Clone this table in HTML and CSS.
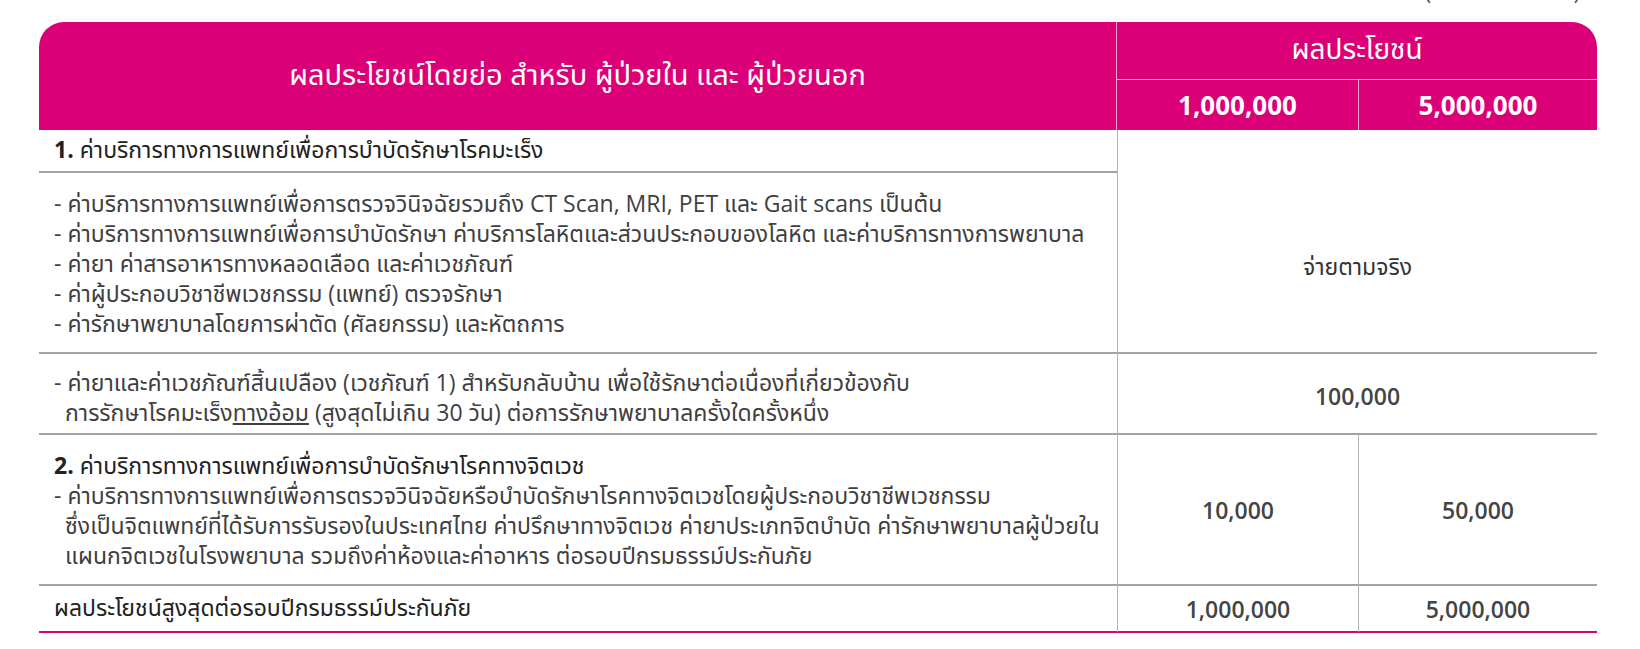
FILE: index.html
```html
<!DOCTYPE html>
<html lang="th">
<head>
<meta charset="utf-8">
<link rel="stylesheet" href="styles.css">
</head>
<body>
<div class="page">
  <div class="unit"><span>(จำนวนเงิน : บาท)</span></div>
  <div class="table">
    <div class="h-title">ผลประโยชน์โดยย่อ สำหรับ ผู้ป่วยใน และ ผู้ป่วยนอก</div>
    <div class="h-benefit">ผลประโยชน์</div>
    <div class="h-amt">1,000,000</div>
    <div class="h-amt h-amt-last">5,000,000</div>

    <div class="c-head">
      <span><b>1.</b> ค่าบริการทางการแพทย์เพื่อการบำบัดรักษาโรคมะเร็ง</span>
    </div>
    <div class="c-val c-span c-actual">จ่ายตามจริง</div>
    <div class="c-list">
      <div class="li">- ค่าบริการทางการแพทย์เพื่อการตรวจวินิจฉัยรวมถึง CT Scan, MRI, PET และ Gait scans เป็นต้น</div>
      <div class="li">- ค่าบริการทางการแพทย์เพื่อการบำบัดรักษา ค่าบริการโลหิตและส่วนประกอบของโลหิต และค่าบริการทางการพยาบาล</div>
      <div class="li">- ค่ายา ค่าสารอาหารทางหลอดเลือด และค่าเวชภัณฑ์</div>
      <div class="li">- ค่าผู้ประกอบวิชาชีพเวชกรรม (แพทย์) ตรวจรักษา</div>
      <div class="li">- ค่ารักษาพยาบาลโดยการผ่าตัด (ศัลยกรรม) และหัตถการ</div>
    </div>

    <div class="c-text c-row3">
      <div class="li">- ค่ายาและค่าเวชภัณฑ์สิ้นเปลือง (เวชภัณฑ์ 1) สำหรับกลับบ้าน เพื่อใช้รักษาต่อเนื่องที่เกี่ยวข้องกับ</div>
      <div class="li indent">การรักษาโรคมะเร็ง<u>ทางอ้อม</u> (สูงสุดไม่เกิน 30 วัน) ต่อการรักษาพยาบาลครั้งใดครั้งหนึ่ง</div>
    </div>
    <div class="c-val c-span c-row3">100,000</div>

    <div class="c-text c-row4">
      <div class="li head"><b>2.</b> ค่าบริการทางการแพทย์เพื่อการบำบัดรักษาโรคทางจิตเวช</div>
      <div class="li">- ค่าบริการทางการแพทย์เพื่อการตรวจวินิจฉัยหรือบำบัดรักษาโรคทางจิตเวชโดยผู้ประกอบวิชาชีพเวชกรรม</div>
      <div class="li indent">ซึ่งเป็นจิตแพทย์ที่ได้รับการรับรองในประเทศไทย ค่าปรึกษาทางจิตเวช ค่ายาประเภทจิตบำบัด ค่ารักษาพยาบาลผู้ป่วยใน</div>
      <div class="li indent">แผนกจิตเวชในโรงพยาบาล รวมถึงค่าห้องและค่าอาหาร ต่อรอบปีกรมธรรม์ประกันภัย</div>
    </div>
    <div class="c-val c-row4">10,000</div>
    <div class="c-val c-row4 c-last">50,000</div>

    <div class="c-text c-total">ผลประโยชน์สูงสุดต่อรอบปีกรมธรรม์ประกันภัย</div>
    <div class="c-val c-total">1,000,000</div>
    <div class="c-val c-total c-last">5,000,000</div>
  </div>
</div>
</body>
</html>
```

FILE: styles.css
```css
* { box-sizing: border-box; }
html, body { margin: 0; padding: 0; background: #fff; }
body {
  font-family: "Open Sans", "Noto Sans", "Noto Sans Thai", sans-serif;
  color: #3f3f3f;
}
.page {
  padding: 0 43px 0 39px;
  width: 1640px;
}
.unit {
  height: 22px;
  display: flex;
  justify-content: flex-end;
  align-items: flex-start;
  padding-right: 17px;
  font-size: 22px;
  color: #555;
}
.unit span {
  display: block;
  line-height: 24px;
  margin-top: -21px;
}
.table {
  display: grid;
  grid-template-columns: 1078px 241px 239px;
  grid-template-rows: 58px 50px 43px 181px 81px 151px 47px;
  width: 1558px;
}
.h-title {
  grid-column: 1;
  grid-row: 1 / 3;
  background: #dc0078;
  color: #fff;
  border-top-left-radius: 25px;
  border-right: 1px solid #f3a6cf;
  display: flex;
  align-items: center;
  justify-content: center;
  font-size: 29px;
}
.h-benefit {
  grid-column: 2 / 4;
  grid-row: 1;
  background: #dc0078;
  color: #fff;
  border-top-right-radius: 25px;
  border-bottom: 1px solid #f3a6cf;
  display: flex;
  align-items: center;
  justify-content: center;
  font-size: 28px;
}
.h-amt {
  grid-row: 2;
  background: #dc0078;
  color: #fff;
  display: flex;
  align-items: center;
  justify-content: center;
  font-size: 26px;
  font-weight: 700;
}
.h-amt-last { border-left: 1px solid #f3a6cf; }

.c-head {
  grid-column: 1;
  grid-row: 3;
  display: flex;
  align-items: center;
  padding: 0 15px;
  border-bottom: 2px solid #a3a3a3;
  font-size: 23px;
  color: #222;
}
.c-list {
  grid-column: 1;
  grid-row: 4;
  padding: 15px 15px 13px;
  border-bottom: 2px solid #a3a3a3;
  font-size: 23px;
}
.li { line-height: 30px; white-space: nowrap; }
.li.indent { padding-left: 11px; }
.li.head { color: #222; }
.c-text {
  grid-column: 1;
  display: flex;
  flex-direction: column;
  justify-content: center;
  padding: 0 15px;
  border-bottom: 2px solid #a3a3a3;
  font-size: 23px;
}
.c-text.c-row3 { padding-top: 6px; }
.c-row3 { grid-row: 5; }
.c-row4 { grid-row: 6; }
.c-total { grid-row: 7; border-bottom: 2px solid #dc0078; color: #222; }

.c-val {
  display: flex;
  align-items: center;
  justify-content: center;
  border-left: 1px solid #b5b5b5;
  border-bottom: 2px solid #a3a3a3;
  font-size: 23px;
  font-weight: 600;
  color: #444;
}
.c-span { grid-column: 2 / 4; }
.c-actual {
  grid-row: 3 / 5;
  padding-top: 52px;
  font-size: 23px;
  font-weight: 400;
  color: #333;
}
.c-val.c-row3 { padding-top: 4px; }
.c-val.c-row4 { grid-row: 6; }
.c-val.c-total { grid-row: 7; border-bottom: 2px solid #dc0078; }
.c-last { border-left: 1px solid #b5b5b5; }
```
